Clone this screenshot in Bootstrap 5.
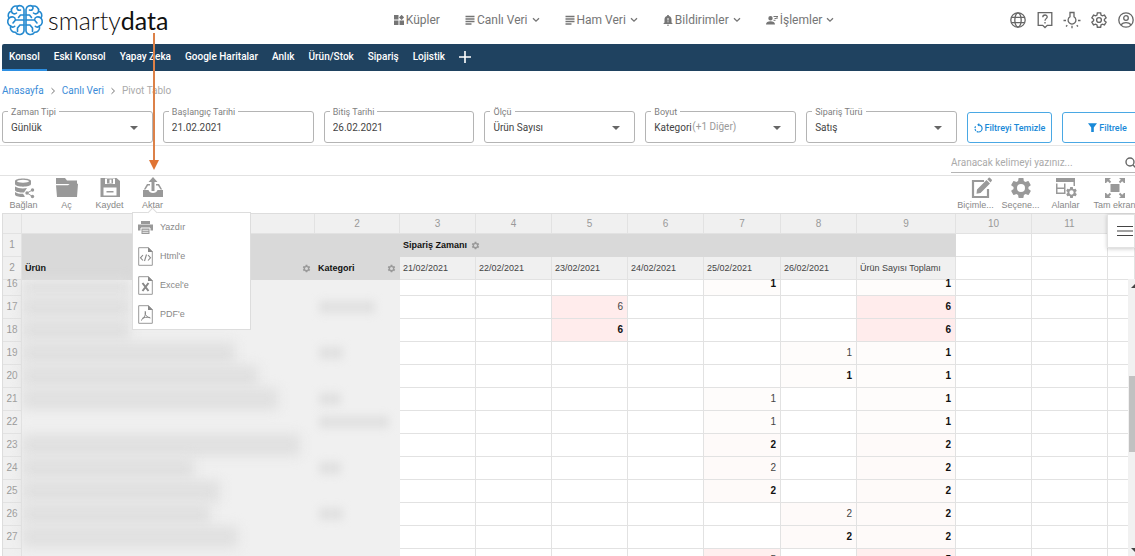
<!DOCTYPE html>
<html lang="tr">
<head>
<meta charset="utf-8">
<meta name="viewport" content="width=device-width, initial-scale=1">
<title>smartydata - Pivot Tablo</title>
<link href="https://cdn.jsdelivr.net/npm/bootstrap@5.3.0/dist/css/bootstrap.min.css" rel="stylesheet">
<style>
  body { font-family: Roboto, "Liberation Sans", sans-serif; font-size: 10px; line-height: 16px; color: #555; background: #fff; }
  button { font-family: inherit; }
  a { text-decoration: none; }
  svg { display: block; flex: none; }
  .page { height: 100vh; overflow: hidden; }
  .page > * { flex-shrink: 0; }
  .top-row { height: 44px; padding-bottom: 4px; }
  .brand { width: 34.7%; padding-left: 6px; color: #111; font: 300 25px/32px Lato, sans-serif; }
  .brand b { font-weight: 400; }
  .main-menu { gap: 25px; }
  .main-menu a { color: #757575; font-size: 12px; gap: 2px; }
  .main-menu .chev { margin-left: 2px; }
  .tools { gap: 9px; }
  .tools button, .pivot-bar button, .export-menu button { border: 0; background: none; padding: 0; }
  .tab-strip { background: #1f4260; margin-left: 2px; height: 27px; border-radius: 2px 0 0 0; }
  .tab-strip a { color: #fff; font-weight: 500; padding: 0 7px; line-height: 26px; border-bottom: 2px solid transparent; white-space: nowrap; }
  .tab-strip a.active { border-color: #2d8fe2; }
  .crumbs { height: 34px; padding: 12px 0 0 2px; }
  .crumbs .breadcrumb-item + .breadcrumb-item { padding-left: 0; }
  .crumbs .breadcrumb-item + .breadcrumb-item::before { content: none; }
  .crumbs a { color: #3b8cd8; }
  .crumbs .active { color: #aaa; }
  .crumbs ol { gap: 6px; }
  .filters { gap: 10px; padding-left: 2px; margin-right: -18px; height: 41px; padding-top: 6px; border-bottom: 1px solid #e6e6e6; }
  .field { flex: 1 1 0; min-width: 0; height: 32px; border: 1px solid #b4b4b4; border-radius: 3px; }
  .field label { position: absolute; top: -6px; left: 5px; padding: 0 3px; background: #fff; color: #808080; font-size: 9px; line-height: 12px; white-space: nowrap; }
  .field select, .field input { width: 100%; height: 30px; border: 0; background: none; padding: 1px 8px 0; appearance: none; color: #444; font-size: 10px; outline: 0; }
  .field.drop::after { content: ""; position: absolute; right: 14px; top: 14px; border: 4px solid transparent; border-top-color: #666; border-bottom: 0; }
  .field .more { position: absolute; left: 46px; top: 7px; color: #999; pointer-events: none; }
  .filters .btn { --bs-btn-color: #1989d8; --bs-btn-border-color: #4aa8e4; --bs-btn-border-radius: 3px; height: 31px; padding: 0; gap: 2px; font-size: 9px; font-weight: 500; line-height: 16px; margin-top: 1px; }
  .btn-clear { width: 85px; }
  .btn-apply { width: 91px; }
  .seek { height: 30px; border-bottom: 1px solid #e2e2e2; }
  .seek-box { width: 188px; margin-right: -4px; height: 27px; border-bottom: 1px solid #b5b5b5; }
  .seek-box input { border: 0; outline: 0; padding: 8px 0 0; font-size: 10px; color: #444; background: none; }
  .seek-box input::placeholder { color: #aaa; opacity: 1; }
  .pivot-bar { height: 37px; padding: 1px 0 0 2px; font-family: "Liberation Sans", Arial, sans-serif; font-size: 9px; color: #888; }
  .pivot-bar button { display: block; color: #888; width: 43px; line-height: 11px; white-space: nowrap; }
  .pivot-bar .right-set { margin-right: -2px; }
  .pivot-bar .right-set button { width: 45px; }
  .pivot-bar button svg { margin: 0 auto 1px; }
  .pivot-bar .export-menu { position: absolute; z-index: 5; left: 1px; top: 35px; width: 119px; background: #fff; border: 1px solid #ddd; }
  .pivot-bar .export-menu button { display: flex; align-items: center; gap: 7px; width: 100%; height: 29px; padding-left: 5px; text-align: left; }
  .export-menu button svg { margin: 0 !important; }
  .export-menu::before { content: ""; position: absolute; left: 16px; top: -4px; width: 7px; height: 7px; background: #fff; border: 1px solid #ddd; border-width: 1px 0 0 1px; transform: rotate(45deg); }
  .page > .grid-zone { flex: 1 1 0; min-height: 0; overflow: hidden; padding-left: 2px; font-family: "Liberation Sans", Arial, sans-serif; font-size: 9px; }
  .pivot { table-layout: fixed; width: 100%; min-width: 1126px; border-collapse: separate; border-spacing: 0; border-top: 1px solid #ddd; border-left: 1px solid #ddd; color: #444; }
  .pivot th, .pivot td { height: 23px; padding: 0 6px 0 3px; border-right: 1px solid #e2e2e2; border-bottom: 1px solid #e2e2e2; line-height: 14px; white-space: nowrap; font-weight: 400; vertical-align: middle; }
  .pivot .idx th { height: 20px; }
  .pivot .idx th, .pivot .no { background: #f0f0f0; color: #999; text-align: center; padding: 0; }
  .pivot .cap { background: #d9d9d9; border-color: #d9d9d9; color: #111; font-weight: 700; }
  .pivot .cap .gear { margin-right: -3px; }
  .pivot .sub { background: #f0f0f0; color: #444; }
  .pivot td { text-align: right; padding-right: 4px; }
  .pivot .no, .pivot td, .pivot .idx th { font-size: 10px; }
  .pivot .total { font-weight: 700; color: #111; }
  .heat1 { background: #fefcfb; }
  .heat2 { background: #fefaf9; }
  .heat5 { background: #ffefef; }
  .heat6 { background: #ffecec; }
  .pivot td.veiled { background: #f0f0f0; border-color: #f0f0f0; padding: 0; }
  .veil { height: 22px; background: #e0e0e0; filter: blur(6px); }
  .veil-sm { height: 12px; margin-left: 4px; background: #e0e0e0; filter: blur(4px); }
  .pivot .cut td, .pivot .cut th { height: 16px; line-height: 8px; vertical-align: top; }
  .cut .veil { height: 15px; }
  .side-toggle { position: absolute; right: 0; top: 1px; width: 28px; height: 34px; border: 1px solid #e2e2e2; background: #fff; padding: 0 0 0 9px; box-shadow: 0 1px 4px rgba(0,0,0,.2); }
  .rail { position: absolute; right: 0; top: 66px; bottom: 0; width: 7px; background: #f1f1f1; }
  .rail i { position: absolute; left: 1px; right: 0; top: 97px; height: 76px; background: #c1c1c1; }
  .rail svg { position: absolute; left: 3px; }
  .rail .up { top: 5px; }
  .rail .down { bottom: 4px; }
  .pointer { position: absolute; z-index: 9; left: 149px; top: 33px; }
</style>
</head>
<body>
<svg width="0" height="0" class="position-absolute">
  <symbol id="chevron" viewBox="0 0 8 6"><path d="M1 1.2 4 4.2 7 1.2" fill="none" stroke="#757575" stroke-width="1.3"/></symbol>
  <symbol id="lines" viewBox="0 0 10 10"><path d="M.5 1.5h9M.5 4h9M.5 6.5h9M.5 9h6" stroke="#757575" stroke-width="1.4"/></symbol>
  <symbol id="cog" viewBox="0 0 24 24"><path fill-rule="evenodd" d="M19.4 13c0-.3.1-.6.1-1s0-.7-.1-1l2.1-1.6c.2-.2.3-.4.1-.7l-2-3.4c-.1-.3-.3-.3-.6-.3l-2.5 1c-.5-.4-1.1-.7-1.7-1L14.500 2.400c0-.2-.200-.400-.5-.400h-4c-.3 0-.5.2-.5.400L9.100 5c-.6.300-1.200.600-1.700 1l-2.500-1c-.2 0-.5 0-.600.300l-2 3.400c-.1.200 0 .500.100.700L4.600 11c0 .300-.1.600-.1 1s0 .700.100 1l-2.200 1.600c-.1.200-.2.500-.1.700l2 3.400c.1.300.4.300.600.300l2.500-1c.5.400 1.100.700 1.700 1l.4 2.600c0 .200.200.400.5.400h4c.3 0 .5-.2.5-.400l.4-2.600c.6-.3 1.200-.600 1.700-1l2.500 1c.2 0 .5 0 .600-.300l2-3.400c.1-.200 0-.500-.1-.700zM12 16a4 4 0 1 1 0-8 4 4 0 0 1 0 8z"/></symbol>
  <symbol id="sheet" viewBox="0 0 15 19"><path d="M.7.7h9.600l4 4v13.600H.7z" fill="#fff" stroke="#999"/><path d="M10 0v5h5z" fill="#888"/></symbol>
  <symbol id="lobe" viewBox="0 0 19 32"><g fill="none" stroke="#2489cf" stroke-width="1.6" stroke-linecap="round" stroke-linejoin="round"><path d="M18 5.500C17.500 2 14 .8 11.500 2.200 8 1.500 5 3.500 5.400 7 2.500 8 1.300 11 3 14 .8 17 1.500 20.500 4.500 22c-.7 4 2 6.500 5 6.300 2 3.400 8 2.700 8.500-1.300z"/><path d="M11.500 2.500c-1.500 2 .5 4.500 3 3.500M5.500 7.500c.5 2.500 3.500 3 5 1.500M3.300 14c2.500-2 6-1 6 1.500M18 11h-3.500l-2 2.500M18 16H9.500l-2.500 3M4.700 22c1 1.500 3 1.500 4 .3M18 21h-4l-2.500 3v3.500"/></g></symbol>
</svg>

<div class="page d-flex flex-column position-relative">
  <header class="top-row d-flex align-items-center">
    <div class="brand d-flex align-items-center">
      <svg width="38" height="32" viewBox="0 0 38 32"><use href="#lobe" width="19" height="32"/><g transform="matrix(-1 0 0 1 38 0)"><use href="#lobe" width="19" height="32"/></g></svg>
      <span class="ms-1">smarty<b>data</b></span>
    </div>
    <nav class="main-menu d-flex">
      <a href="#" class="d-flex align-items-center"><svg width="10" height="10" viewBox="0 0 10 10" fill="#757575"><path d="M0 0h4.500v4.500H0zM0 5.500h4.500V10H0zM5.500 5.500H10V10H5.500zM7.600-.2 10.200 2.400 7.600 5 5 2.400z"/></svg>Küpler</a>
      <a href="#" class="d-flex align-items-center"><svg width="10" height="10"><use href="#lines"/></svg>Canlı Veri<svg class="chev" width="8" height="6"><use href="#chevron"/></svg></a>
      <a href="#" class="d-flex align-items-center"><svg width="10" height="10"><use href="#lines"/></svg>Ham Veri<svg class="chev" width="8" height="6"><use href="#chevron"/></svg></a>
      <a href="#" class="d-flex align-items-center"><svg width="10" height="11" viewBox="0 0 10 11"><path d="M5 0c.7 0 1 .4 1 1 1.700.5 2.500 1.800 2.500 3.500V7.500l1 1V9H.500v-.5l1-1v-3C1.500 2.800 2.300 1.500 4 1c0-.6.3-1 1-1zM4 9.700h2c0 .7-.4 1.100-1 1.100s-1-.4-1-1.100z" fill="#757575"/><path d="M5 3v2.500M5 6.300v1" stroke="#fff"/></svg>Bildirimler<svg class="chev" width="8" height="6"><use href="#chevron"/></svg></a>
      <a href="#" class="d-flex align-items-center"><svg width="12" height="10" viewBox="0 0 12 10"><path d="M4.500 1a2.200 2.200 0 1 1 0 4.400 2.200 2.200 0 0 1 0-4.400zM0 9.500c0-2.200 2-3.200 4.500-3.200S9 7.300 9 9.500z" fill="#757575"/><path d="M7.500 1.500H12M8.500 3.500h2M7.500 5.300h2M11 1v3" stroke="#757575"/></svg>İşlemler<svg class="chev" width="8" height="6"><use href="#chevron"/></svg></a>
    </nav>
    <div class="tools d-flex ms-auto align-items-center">
      <button type="button" aria-label="Dil"><svg width="18" height="18" viewBox="0 0 18 18" fill="none" stroke="#666" stroke-width="1.3"><circle cx="9" cy="9" r="7.200"/><ellipse cx="9" cy="9" rx="3.200" ry="7.200"/><path d="M2.500 6.400h13M2.500 11.600h13"/></svg></button>
      <button type="button" aria-label="Yardım"><svg width="18" height="18" viewBox="0 0 18 18" fill="none" stroke="#666" stroke-width="1.300"><path d="M2.200 1.700h13.600v12.600h-4.500L9 16.500l-2.300-2.200H2.200z"/><path d="M6.800 6.200C6.800 3.200 11.300 3.400 11.200 6 11.100 7.600 9 7.800 9 9.800M9 11v1.500"/></svg></button>
      <button type="button" aria-label="Tema"><svg width="18" height="18" viewBox="0 0 18 18" fill="none" stroke="#666" stroke-width="1.300"><path d="M7 1.500h4v4.300a3.900 3.900 0 1 1-4 0zM.5 9.500h2.500M15 9.500h2.500M9 14.800v2.500M3 15.500l1.300-1.300M15 15.500l-1.300-1.300"/></svg></button>
      <button type="button" aria-label="Ayarlar"><svg width="18" height="18" viewBox="0 0 24 24" fill="none" stroke="#666" stroke-width="1.800"><path d="M9.800 2.500h4.400l.5 3 1.800 1 2.800-1 2.200 3.700-2.300 1.900v1.900l2.300 1.900-2.200 3.700-2.800-1-1.800 1-.5 3H9.800l-.5-3-1.800-1-2.800 1-2.200-3.700L4.800 13v-1.900L2.500 9.200l2.200-3.700 2.800 1 1.800-1z"/><circle cx="12" cy="12" r="3.200"/></svg></button>
      <button type="button" aria-label="Profil"><svg width="18" height="18" viewBox="0 0 18 18" fill="none" stroke="#666" stroke-width="1.300"><circle cx="9" cy="9" r="7.200"/><circle cx="9" cy="7" r="2.300"/><path d="M4 13.800c2.500-2.800 7.500-2.800 10 0"/></svg></button>
    </div>
  </header>

  <nav class="tab-strip d-flex align-items-stretch">
    <a href="#" class="active">Konsol</a><a href="#">Eski Konsol</a><a href="#">Yapay Zeka</a><a href="#">Google Haritalar</a><a href="#">Anlık</a><a href="#">Ürün/Stok</a><a href="#">Sipariş</a><a href="#">Lojistik</a>
    <a href="#" class="d-flex align-items-center" aria-label="Ekle"><svg width="12" height="12" viewBox="0 0 12 12"><path d="M6 0v12M0 6h12" stroke="#fff" stroke-width="1.600"/></svg></a>
  </nav>

  <nav class="crumbs" aria-label="breadcrumb">
    <ol class="breadcrumb mb-0 align-items-center">
      <li class="breadcrumb-item"><a href="#">Anasayfa</a></li>
      <li><svg width="6" height="8" viewBox="0 0 6 8"><path d="M1.500 1.200 4.500 4 1.500 6.800" fill="none" stroke="#777"/></svg></li>
      <li class="breadcrumb-item"><a href="#">Canlı Veri</a></li>
      <li><svg width="6" height="8" viewBox="0 0 6 8"><path d="M1.500 1.200 4.500 4 1.500 6.800" fill="none" stroke="#777"/></svg></li>
      <li class="breadcrumb-item active">Pivot Tablo</li>
    </ol>
  </nav>

  <form class="filters d-flex">
    <div class="field drop position-relative"><label for="f1">Zaman Tipi</label><select id="f1"><option>Günlük</option></select></div>
    <div class="field position-relative"><label for="f2">Başlangıç Tarihi</label><input id="f2" value="21.02.2021"></div>
    <div class="field position-relative"><label for="f3">Bitiş Tarihi</label><input id="f3" value="26.02.2021"></div>
    <div class="field drop position-relative"><label for="f4">Ölçü</label><select id="f4"><option>Ürün Sayısı</option></select></div>
    <div class="field drop position-relative"><label for="f5">Boyut</label><select id="f5"><option>Kategori</option></select><span class="more">(+1 Diğer)</span></div>
    <div class="field drop position-relative"><label for="f6">Sipariş Türü</label><select id="f6"><option>Satış</option></select></div>
    <button type="reset" class="btn btn-outline-primary btn-clear d-flex align-items-center justify-content-center"><svg width="9" height="10" viewBox="0 0 9 10" fill="none" stroke="#1989d8" stroke-width="1.200"><path d="M4.500 1.800A3.600 3.600 0 0 1 4.500 9"/><path d="M4.500 9a3.600 3.600 0 0 1-2.600-6" stroke-dasharray="1.800 1"/><path d="M5.200 0 3.200 1.800l2 1.800" fill="#1989d8" stroke="none"/></svg>Filtreyi Temizle</button>
    <button type="button" class="btn btn-outline-primary btn-apply d-flex align-items-center justify-content-center"><svg width="9" height="9" viewBox="0 0 9 9"><path d="M0 .3h9L5.800 4.500V9H3.200V4.500z" fill="#1989d8"/></svg>Filtrele</button>
  </form>

  <div class="seek d-flex justify-content-end">
    <div class="seek-box d-flex align-items-center">
      <input class="flex-grow-1" type="text" aria-label="Ara" placeholder="Aranacak kelimeyi yazınız...">
      <svg class="mt-2" width="14" height="12" viewBox="0 0 14 12" fill="none" stroke="#666" stroke-width="1.400"><circle cx="5" cy="5" r="4"/><path d="m8 8 4 4"/></svg>
    </div>
  </div>

  <div class="pivot-bar d-flex align-items-start">
    <button type="button"><svg width="22" height="22" viewBox="0 0 22 22"><g fill="#999"><path d="M2 4c0-3.500 16-3.500 16 0v3c0 3.500-16 3.500-16 0z"/><path d="M2 9.500c3 2 8 2.400 12 1.500l-3 4.400c-4 .5-9-.5-9-2.400zM2 15c2 1.500 5 2 8 1.800l2 3c-5 .7-10-.4-10-2.300z"/><circle cx="14" cy="16" r="1.700"/><circle cx="19.500" cy="13" r="1.700"/><circle cx="19.500" cy="19.500" r="1.700"/></g><ellipse cx="10" cy="4.200" rx="6" ry="1.500" fill="#fff"/><path d="m19.500 13-5.500 3 5.500 3.500" fill="none" stroke="#999"/></svg>Bağlan</button>
    <button type="button"><svg width="22" height="22" viewBox="0 0 22 22" fill="#999"><path d="M0 1h9l2 2.500h10V7H0zM0 8.200h12l2-1.500h8L21 20H1z"/></svg>Aç</button>
    <button type="button"><svg width="22" height="22" viewBox="0 0 22 22"><path d="M1.500 1h16L21 4v16H1.500z" fill="#999"/><path d="M6 1.500h10V7H6zM4.500 10.500h13v8h-13z" fill="#fff"/><path d="M8 2h6v4.500H8zM7.500 14h7v1.500h-7z" fill="#999"/><path d="M10.500 2.500h2v3.500h-2z" fill="#fff"/></svg>Kaydet</button>
    <div class="position-relative">
      <button type="button" aria-expanded="true"><svg width="22" height="22" viewBox="0 0 22 22" fill="#999"><path d="M11 0l4.500 5h-3v9h-3V5h-3zM1 13h5.500c.8 4 8.200 4 9 0H21v7H1z"/><path d="M1.800 12.500 5 7h3v1.500H6L3.500 12.500M20.200 12.500 17 7h-3v1.500h2l2.500 4"/></svg>Aktar</button>
      <div class="export-menu" role="menu">
        <button type="button"><svg width="15" height="15" viewBox="0 0 15 15"><path d="M3 1h9v3H3zM0 4.500h15v6H0z" fill="#999"/><path d="M3 8h9v6.500H3z" fill="#999" stroke="#fff"/><path d="M4.500 10.300h6M4.500 12.300h6" stroke="#fff" stroke-width=".8"/></svg>Yazdır</button>
        <button type="button"><svg width="15" height="19"><use href="#sheet"/><path d="M5 8 2.500 10.800 5 13.500M10 8l2.500 2.800-2.500 2.700M8.500 7.500l-2 6.500" fill="none" stroke="#888" stroke-width="1.100"/></svg>Html'e</button>
        <button type="button"><svg width="15" height="19"><use href="#sheet"/><path d="m4.500 7 6 8M10.500 7l-6 8" stroke="#888" stroke-width="2"/></svg>Excel'e</button>
        <button type="button"><svg width="15" height="19"><use href="#sheet"/><path d="M7 6c1.500 2-.5 7-4 9.500M7 7.500c0 3 2.500 5 5.500 5.500M4 13.500c2-1.200 5-1.500 8-1" fill="none" stroke="#888"/></svg>PDF'e</button>
      </div>
    </div>
    <div class="right-set d-flex ms-auto">
      <button type="button"><svg width="32" height="22" viewBox="-10 0 32 22"><path d="M14 4H3v16h15v-8" fill="none" stroke="#999" stroke-width="2.200"/><path d="m7 12.500 9.500-9.500 3.500 3.500-9.500 9.500-4 .8zM17.300 2.200 19 .5c1 0 3 2 3 3l-1.500 2z" fill="#999"/></svg>Biçimle...</button>
      <button type="button"><svg width="22" height="22" viewBox="1 1 22 22" fill="#999"><use href="#cog" width="24" height="24"/></svg>Seçene...</button>
      <button type="button"><svg width="22" height="22" viewBox="0 0 22 22" fill="#999"><path d="M1 1h19v4H1zM1 6.500h1.500V17H1zM1 10.500h9V12H1zM1 15.500h8V17H1zM9 6.500h1.500V17H9zM18.500 5H20v4h-1.500z"/><svg x="10" y="9" width="13" height="13"><use href="#cog"/></svg></svg>Alanlar</button>
      <button type="button" class="ms-1"><svg width="22" height="22" viewBox="0 0 22 22" fill="#999"><path d="M6.500 7h9v8h-9zM1 1h6L5.200 2.800l2 2-1.400 1.400-2-2L2 6H1zM21 1h-6l1.800 1.800-2 2 1.400 1.400 2-2L20 6h1zM1 21h6l-1.800-1.800 2-2-1.400-1.400-2 2L2 16H1zM21 21h-6l1.800-1.800-2-2 1.400-1.400 2 2L20 16h1z"/></svg>Tam ekran</button>
    </div>
  </div>

  <div class="grid-zone position-relative">
    <table class="pivot">
      <colgroup>
        <col style="width:19px"><col style="width:293px"><col style="width:85px"><col style="width:76px"><col style="width:76px"><col style="width:76px"><col style="width:76px"><col style="width:77px"><col style="width:76px"><col style="width:99px"><col style="width:76px"><col style="width:76px"><col>
      </colgroup>
      <thead>
        <tr class="idx"><th></th><th></th><th>2</th><th>3</th><th>4</th><th>5</th><th>6</th><th>7</th><th>8</th><th>9</th><th>10</th><th>11</th><th></th></tr>
        <tr><th class="no">1</th><th class="cap"></th><th class="cap"></th><th class="cap" colspan="7"><span class="d-flex align-items-center">Sipariş Zamanı<svg class="ms-1" width="9" height="9" fill="#999"><use href="#cog"/></svg></span></th><th></th><th></th><th></th></tr>
        <tr><th class="no">2</th><th class="cap"><span class="d-flex align-items-center justify-content-between">Ürün<svg class="gear" width="9" height="9" fill="#999"><use href="#cog"/></svg></span></th><th class="cap"><span class="d-flex align-items-center justify-content-between">Kategori<svg class="gear" width="9" height="9" fill="#999"><use href="#cog"/></svg></span></th><th class="sub">21/02/2021</th><th class="sub">22/02/2021</th><th class="sub">23/02/2021</th><th class="sub">24/02/2021</th><th class="sub">25/02/2021</th><th class="sub">26/02/2021</th><th class="sub">Ürün Sayısı Toplamı</th><th></th><th></th><th></th></tr>
      </thead>
      <tbody id="rows"></tbody>
    </table>
    <button type="button" class="side-toggle" aria-label="Menü"><svg width="16" height="12" viewBox="0 0 16 12"><path d="M0 1.500h16M0 6h16M0 10.500h16" stroke="#444" stroke-width="1.200"/></svg></button>
    <div class="rail"><svg class="up" width="8" height="4"><path d="M0 4 4 0l4 4z" fill="#444"/></svg><i></i><svg class="down" width="8" height="4"><path d="M0 0l4 4 4-4z" fill="#444"/></svg></div>
  </div>

  <svg class="pointer" width="10" height="137" viewBox="0 0 10 137"><path d="M5 0v128" stroke="#dc8148" stroke-width="2"/><path d="M0 127h10L5 137z" fill="#e07434"/></svg>
</div>

<script src="https://cdn.jsdelivr.net/npm/bootstrap@5.3.0/dist/js/bootstrap.bundle.min.js"></script>
<script>
  // row number, date column of the value (0 = 21/02), value, subtotal row?, masked product width, masked category width
  const data = [
    [16, 4, 1, true, 108, 0], [17, 2, 6, false, 108, 56], [18, 2, 6, true, 108, 0],
    [19, 5, 1, false, 213, 24], [20, 5, 1, true, 236, 0], [21, 4, 1, false, 256, 22],
    [22, 4, 1, false, 0, 70], [23, 4, 2, true, 278, 0], [24, 4, 2, false, 172, 22],
    [25, 4, 2, true, 198, 0], [26, 5, 2, false, 188, 24], [27, 5, 2, true, 216, 0],
    ['', 4, 5, false, 0, 0]
  ];
  document.getElementById('rows').innerHTML = data.map(([no, at, n, sum, w1, w2]) => {
    let cells = '';
    for (let i = 0; i < 6; i++)
      cells += i === at ? `<td class="heat${n} ${sum ? 'total' : ''}">${n}</td>` : '<td></td>';
    return `<tr class="${no === 16 ? 'cut' : ''}"><th class="no">${no}</th>
      <td class="veiled">${w1 ? `<div class="veil" style="width:${w1}px"></div>` : ''}</td>
      <td class="veiled">${w2 ? `<div class="veil-sm" style="width:${w2}px"></div>` : ''}</td>
      ${cells}<td class="heat${n} total">${n}</td><td></td><td></td><td></td></tr>`;
  }).join('');
</script>
</body>
</html>
